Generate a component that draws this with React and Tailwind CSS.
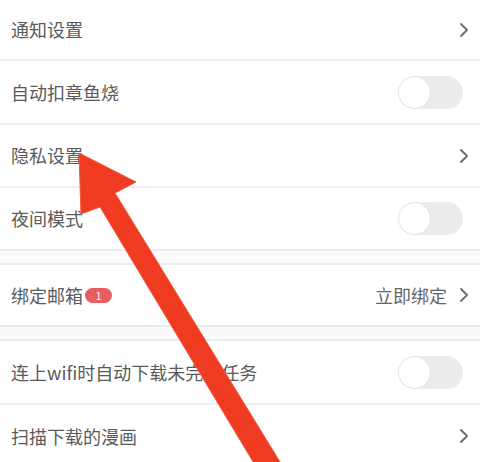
import React from 'react';

const Chevron = () => (
  <svg width="10" height="16" viewBox="0 0 10 16" className="shrink-0">
    <polyline points="2,2 8,8 2,14" fill="none" stroke="#6b6b6b" strokeWidth="1.8" strokeLinecap="round" strokeLinejoin="round" />
  </svg>
);

const Toggle = () => (
  <div className="mr-[6px] flex h-[33px] w-[65px] items-center rounded-full bg-[#ececec] px-[1px]">
    <div className="h-[31px] w-[31px] rounded-full bg-white shadow-[0_0_2px_rgba(0,0,0,0.12)]" />
  </div>
);

const Row = ({ label, h, children }) => (
  <div className={`flex items-center justify-between px-[11px] ${h}`}>
    <div className="flex items-center">{label}</div>
    <div className="flex items-center">{children}</div>
  </div>
);

const Line = () => <div className="h-[2px] bg-[#efefef]" />;

const Band = () => (
  <div className="h-[16px] border-y-2 border-[#ededed] bg-[#fafafa]" />
);

export default function App() {
  return (
    <div
      className="relative h-[462px] w-[480px] overflow-hidden bg-white text-[18px] text-[#5a5a5a]"
      style={{ fontFamily: '"Noto Sans CJK SC", "Noto Sans", sans-serif' }}
    >
      <Row label="通知设置" h="h-[59px]">
        <Chevron />
      </Row>
      <Line />
      <Row label="自动扣章鱼烧" h="h-[62px]">
        <Toggle />
      </Row>
      <Line />
      <Row label="隐私设置" h="h-[61px]">
        <Chevron />
      </Row>
      <Line />
      <Row label="夜间模式" h="h-[61px]">
        <Toggle />
      </Row>
      <Band />
      <Row
        h="h-[60px]"
        label={
          <>
            <span>绑定邮箱</span>
            <span className="ml-[2px] flex h-[15px] w-[27px] items-center justify-center rounded-full bg-[#e85d60] text-[11px] leading-none text-white">
              1
            </span>
          </>
        }
      >
        <span className="mr-[12px] text-[#666666]">立即绑定</span>
        <Chevron />
      </Row>
      <Band />
      <Row label="连上wifi时自动下载未完成任务" h="h-[62px]">
        <Toggle />
      </Row>
      <Line />
      <Row label="扫描下载的漫画" h="h-[62px]">
        <Chevron />
      </Row>

      <svg className="pointer-events-none absolute left-0 top-0" width="480" height="462" viewBox="0 0 480 462">
        <polygon
          points="79,153 136,182 115,193 285,470 258,470 100,207 81,214"
          fill="#ee3b22"
          stroke="#f05a3c"
          strokeWidth="1"
          strokeLinejoin="round"
        />
      </svg>
    </div>
  );
}
